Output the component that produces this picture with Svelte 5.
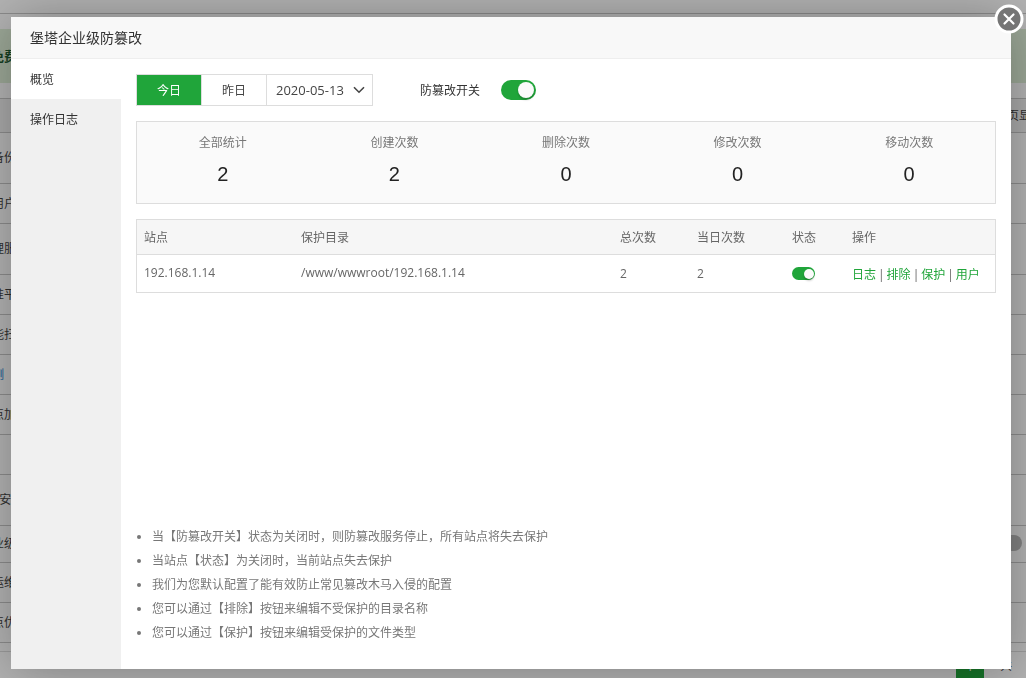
<script>
  const tabs = ['概览', '操作日志'];

  const stats = [
    { name: '全部统计', total: 2 },
    { name: '创建次数', total: 2 },
    { name: '删除次数', total: 0 },
    { name: '修改次数', total: 0 },
    { name: '移动次数', total: 0 }
  ];

  const actions = ['日志', '排除', '保护', '用户'];

  const tips = [
    '当【防篡改开关】状态为关闭时，则防篡改服务停止，所有站点将失去保护',
    '当站点【状态】为关闭时，当前站点失去保护',
    '我们为您默认配置了能有效防止常见篡改木马入侵的配置',
    '您可以通过【排除】按钮来编辑不受保护的目录名称',
    '您可以通过【保护】按钮来编辑受保护的文件类型'
  ];

  // rows of the plugin list under the dialog
  const plugins = [
    { name: '备份', height: 51 },
    { name: '用户', height: 40 },
    { name: '理服', height: 51 },
    { name: '准平', height: 40 },
    { name: '能扫', height: 40 },
    { name: '测', height: 40, link: true },
    { name: '点加', height: 40 },
    { name: '', height: 40 },
    { name: 'P安', height: 51 },
    { name: '业级', height: 37, toggle: true },
    { name: '运维', height: 40 },
    { name: '点优', height: 40 }
  ];

  let activeTab = '概览';
  let day = 'today';
  let date = '2020-05-13';
  let enabled = true;
  let siteEnabled = true;
  let open = true;
</script>

<div class="page">
  <div class="page-top"></div>
  <div class="notice">免费</div>
  <div class="plugins">
    <div class="plugins-head"><span>页显</span></div>
    {#each plugins as plugin}
      <div class="plugin" class:link={plugin.link} style="height: {plugin.height}px">
        <span>{plugin.name}</span>
        {#if plugin.toggle}<i class="plugin-toggle"></i>{/if}
      </div>
    {/each}
  </div>
  <div class="pager">
    <button class="page-current">1</button>
    <span class="page-total">共</span>
  </div>
</div>

{#if open}
  <div class="overlay">
    <div class="dialog" role="dialog" aria-labelledby="dialog-title">
      <button class="close" aria-label="关闭" on:click={() => (open = false)}>
        <svg width="30" height="30" viewBox="0 0 30 30" fill="none">
          <circle cx="15" cy="15" r="13" fill="#757575" stroke="#fff" stroke-width="3" />
          <path d="M10.5 10.5l9 9M19.5 10.5l-9 9" stroke="#fff" stroke-width="2.2" stroke-linecap="round" />
        </svg>
      </button>

      <div class="dialog-title" id="dialog-title">堡塔企业级防篡改</div>

      <div class="dialog-body">
        <nav class="sidebar">
          {#each tabs as tab}
            <button class="tab" class:active={activeTab === tab} on:click={() => (activeTab = tab)}>{tab}</button>
          {/each}
        </nav>

        <div class="content">
          <div class="toolbar">
            <div class="days">
              <button class:on={day === 'today'} on:click={() => (day = 'today')}>今日</button>
              <button class:on={day === 'yesterday'} on:click={() => (day = 'yesterday')}>昨日</button>
              <div class="date">
                <select aria-label="日期" bind:value={date}>
                  <option>2020-05-13</option>
                </select>
                <svg width="12" height="8" viewBox="0 0 12 8" fill="none">
                  <path d="M1 1.2l5 5 5-5" stroke="#444" stroke-width="1.6" />
                </svg>
              </div>
            </div>
            <label class="master" for="master-switch">防篡改开关</label>
            <input class="switch" id="master-switch" type="checkbox" bind:checked={enabled} />
          </div>

          <div class="stats">
            {#each stats as stat}
              <div class="stat">
                <span class="stat-name">{stat.name}</span>
                <span class="stat-total">{stat.total}</span>
              </div>
            {/each}
          </div>

          <table>
            <thead>
              <tr>
                <th class="col-site">站点</th>
                <th>保护目录</th>
                <th class="col-total">总次数</th>
                <th class="col-day">当日次数</th>
                <th class="col-state">状态</th>
                <th class="col-actions">操作</th>
              </tr>
            </thead>
            <tbody>
              <tr>
                <td class="path">192.168.1.14</td>
                <td class="path">/www/wwwroot/192.168.1.14</td>
                <td>2</td>
                <td>2</td>
                <td>
                  <input class="switch small" type="checkbox" aria-label="状态" bind:checked={siteEnabled} />
                </td>
                <td class="actions">
                  {#each actions as action, i}{#if i > 0}<span class="bar">|</span>{/if}<a href="#{action}">{action}</a>{/each}
                </td>
              </tr>
            </tbody>
          </table>

          <ul class="tips">
            {#each tips as tip}
              <li>{tip}</li>
            {/each}
          </ul>
        </div>
      </div>
    </div>
  </div>
{/if}

<style>
  :global(body) {
    margin: 0;
    font-family: 'Open Sans', 'Noto Sans CJK SC', sans-serif;
    font-size: 12px;
    color: #666;
  }

  button,
  select {
    font-family: inherit;
    font-size: inherit;
    cursor: pointer;
  }

  .page {
    box-sizing: border-box;
    height: 100vh;
    overflow: hidden;
    background: #fff;
    color: #444;
  }

  .page-top {
    height: 13px;
    margin-bottom: 15px;
    border-bottom: 1px solid #c8c8c8;
  }

  .notice {
    height: 54px;
    margin-bottom: 15px;
    line-height: 54px;
    text-indent: -9px;
    font-size: 13px;
    font-weight: 700;
    color: #1d5a30;
    background: #dff0d8;
  }

  .plugins {
    border-top: 1px solid #c8c8c8;
  }

  .plugins-head {
    display: flex;
    justify-content: flex-end;
    height: 33px;
    line-height: 33px;
    margin-right: -5px;
    border-bottom: 1px solid #c8c8c8;
    background: #f2f2f2;
  }

  .plugin {
    box-sizing: border-box;
    display: flex;
    align-items: center;
    justify-content: space-between;
    padding-bottom: 2px;
    text-indent: -8px;
    border-bottom: 1px solid #c8c8c8;
  }

  .plugin.link {
    color: #2080d0;
  }

  .plugin-toggle {
    width: 28px;
    height: 16px;
    margin-right: 4px;
    border-radius: 8px;
    background: #bbb;
  }

  .pager {
    display: flex;
    justify-content: flex-end;
    gap: 16px;
    margin-top: 8px;
    padding-right: 14px;
    line-height: 28px;
    border-top: 1px solid #ddd;
  }

  .page-current {
    width: 28px;
    height: 28px;
    padding: 0;
    border: 0;
    color: #fff;
    background: #20a53a;
  }

  .overlay {
    position: fixed;
    inset: 0;
    display: flex;
    padding: 17px 15px 9px 11px;
    background: rgba(0, 0, 0, 0.3);
  }

  .dialog {
    position: relative;
    flex: 1;
    display: flex;
    flex-direction: column;
    background: #fff;
    box-shadow: 1px 1px 50px rgba(0, 0, 0, 0.3);
  }

  .close {
    position: absolute;
    top: -13px;
    right: -13px;
    width: 30px;
    height: 30px;
    padding: 0;
    border: 0;
    background: none;
  }

  .close svg {
    display: block;
  }

  .dialog-title {
    padding-left: 19px;
    line-height: 41px;
    font-size: 14px;
    color: #333;
    background: #f8f8f8;
    border-bottom: 1px solid #eee;
  }

  .dialog-body {
    flex: 1;
    display: flex;
  }

  .sidebar {
    width: 110px;
    display: flex;
    flex-direction: column;
    background: #f0f0f0;
  }

  .tab {
    height: 40px;
    padding: 0 0 0 19px;
    border: 0;
    text-align: left;
    color: #333;
    background: none;
  }

  .tab.active {
    background: #fff;
  }

  .content {
    flex: 1;
    display: flex;
    flex-direction: column;
    padding: 15px 15px 24px;
  }

  .toolbar {
    display: flex;
    align-items: center;
    margin-bottom: 15px;
  }

  .days {
    display: flex;
    height: 30px;
    border: 1px solid #ddd;
  }

  .days button {
    width: 65px;
    padding: 0;
    border: 0;
    border-right: 1px solid #ddd;
    color: #444;
    background: #fff;
  }

  .days button.on {
    color: #fff;
    background: #20a53a;
  }

  .date {
    display: flex;
    align-items: center;
    width: 105px;
  }

  .date select {
    width: 105px;
    height: 30px;
    padding: 0 9px;
    border: 0;
    outline: 0;
    appearance: none;
    color: #444;
    font-size: 13px;
    background: none;
  }

  .date svg {
    flex: none;
    margin-left: -19px;
    pointer-events: none;
  }

  .master {
    margin: 0 21px 0 47px;
    color: #333;
  }

  .switch {
    appearance: none;
    display: flex;
    align-items: center;
    box-sizing: border-box;
    width: 35px;
    height: 20px;
    margin: 0;
    padding: 2px;
    border-radius: 10px;
    background: #ccc;
    cursor: pointer;
  }

  .switch::before {
    content: '';
    width: 16px;
    height: 16px;
    border-radius: 50%;
    background: #fafafa;
    box-shadow: 0 2px 2px rgba(0, 0, 0, 0.2);
  }

  .switch:checked {
    justify-content: flex-end;
    background: #20a53a;
  }

  .switch.small {
    width: 23px;
    height: 13px;
    padding: 1px;
    border-radius: 7px;
  }

  .switch.small::before {
    width: 10px;
    height: 10px;
  }

  .stats {
    display: flex;
    margin-bottom: 15px;
    padding: 11px 0 14px;
    border: 1px solid #ddd;
    background: #fafafa;
  }

  .stat {
    flex: 1;
    display: flex;
    flex-direction: column;
    align-items: center;
  }

  .stat-name {
    line-height: 20px;
    color: #777;
  }

  .stat-total {
    padding-top: 6px;
    line-height: 30px;
    font-family: 'Liberation Sans', sans-serif;
    font-size: 20px;
    color: #222;
  }

  table {
    width: 100%;
    table-layout: fixed;
    border-spacing: 0;
    border: 1px solid #ddd;
  }

  th,
  td {
    padding: 0 7px;
    text-align: left;
    font-weight: 400;
    white-space: nowrap;
  }

  th {
    height: 34px;
    background: #f6f6f6;
    border-bottom: 1px solid #ddd;
  }

  td {
    height: 37px;
  }

  td.path {
    height: 34px;
    padding-bottom: 3px;
  }

  .col-site {
    width: 143px;
  }

  .col-total {
    width: 63px;
  }

  .col-day {
    width: 81px;
  }

  .col-state {
    width: 46px;
  }

  .col-actions {
    width: 136px;
  }

  .actions a {
    color: #20a53a;
    text-decoration: none;
  }

  .bar {
    padding: 0 2px;
  }

  .tips {
    margin: auto 0 0;
    padding-left: 16px;
    line-height: 24px;
    color: #777;
  }
</style>
